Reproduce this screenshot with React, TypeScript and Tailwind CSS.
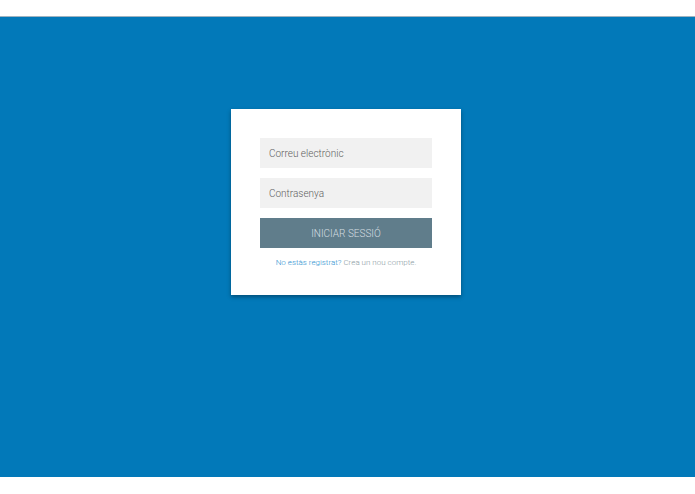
export default function App() {
  return (
    <div className="h-[494px] bg-white font-['Roboto',sans-serif]">
      <div className="h-[17px] border-b border-[#9fb3c0] bg-white" />
      <main className="flex h-[460px] justify-center bg-[#0279b9] pt-[92px]">
        <div className="ml-[-3px] h-[186px] w-[230px] bg-white px-[29px] pt-[29px] shadow-[0_2px_4px_rgba(0,0,0,0.35)]">
          <form className="flex flex-col gap-[10px]" onSubmit={e => e.preventDefault()}>
            <input
              placeholder="Correu electrònic"
              className="h-[30px] w-full bg-[#f1f1f1] px-[9px] text-[10px] font-light text-[#555] outline-none placeholder:text-[#5f5f5f]"
            />
            <input
              type="password"
              placeholder="Contrasenya"
              className="h-[30px] w-full bg-[#f1f1f1] px-[9px] text-[10px] font-light text-[#555] outline-none placeholder:text-[#5f5f5f]"
            />
            <button
              type="submit"
              className="h-[30px] w-full bg-[#607d8b] text-[10px] font-light uppercase text-[#d4dde1]"
            >
              Iniciar sessió
            </button>
          </form>
          <p className="mt-[9px] text-center text-[8px] font-light">
            <a href="#" className="text-[#2a8fd0]">
              No estàs registrat?
            </a>{' '}
            <span className="text-[#8a9aa3]">Crea un nou compte.</span>
          </p>
        </div>
      </main>
    </div>
  );
}
